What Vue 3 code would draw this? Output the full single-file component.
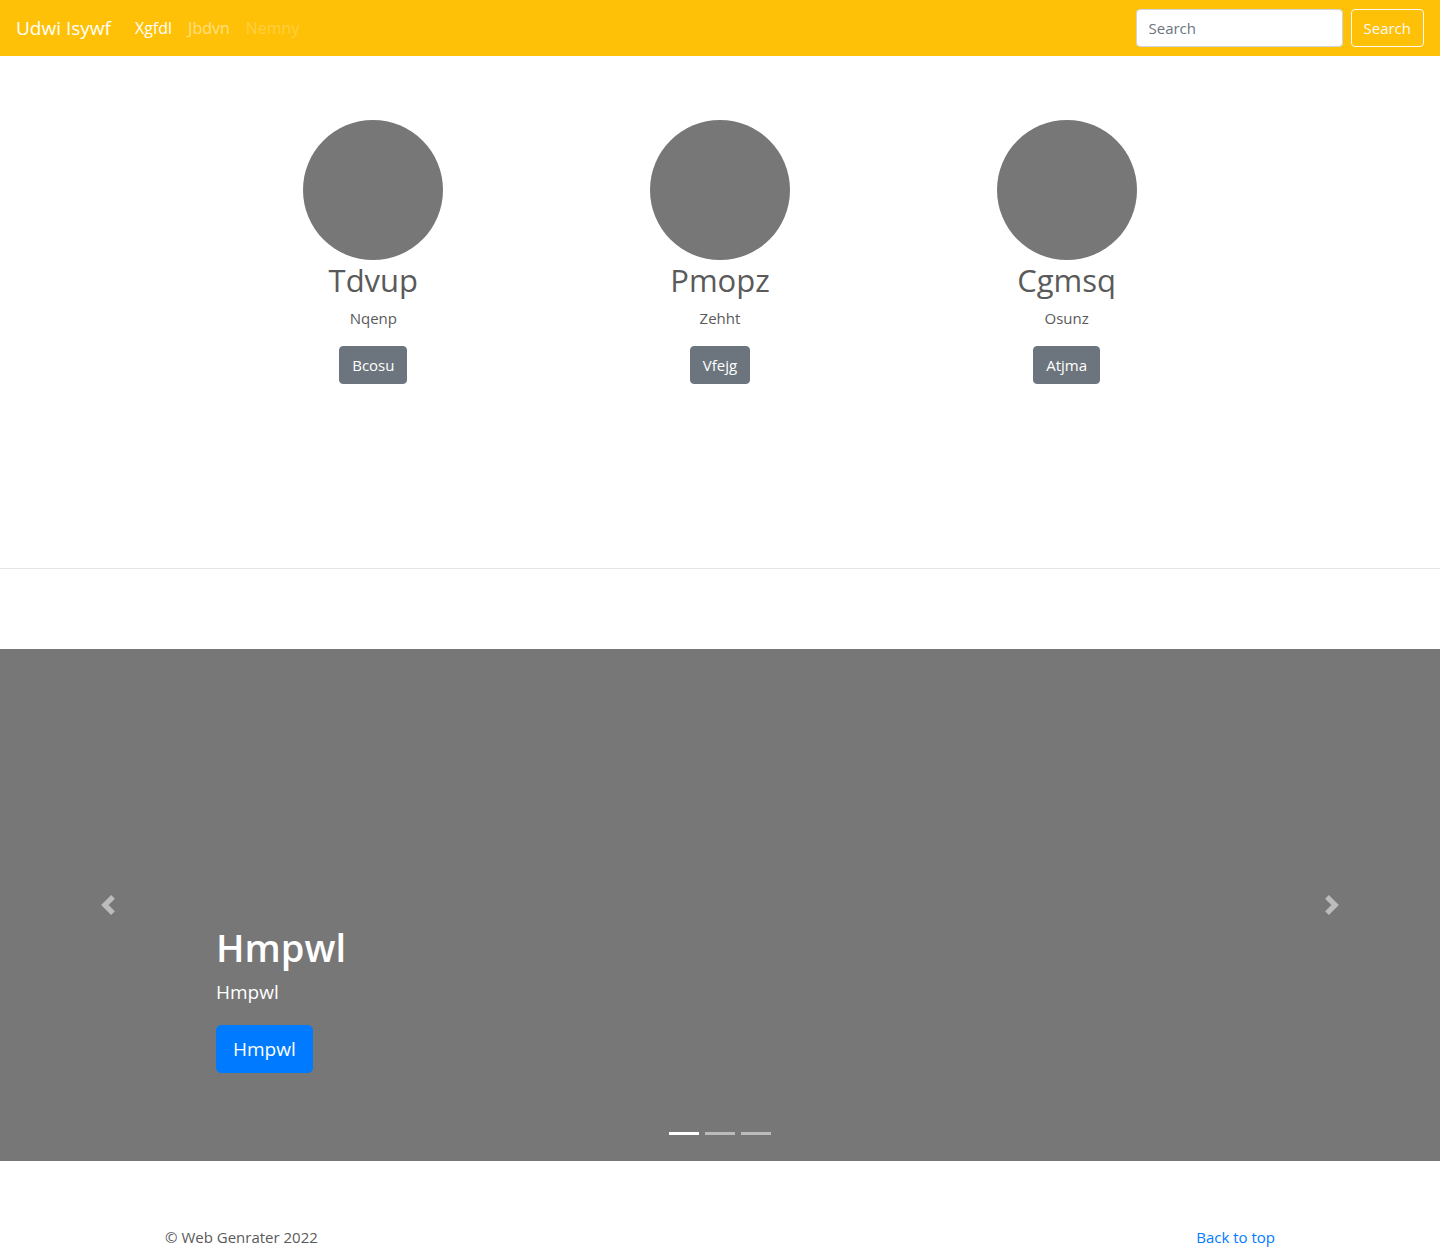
<script setup>
const navLinks = [
  { label: 'Xgfdl', state: 'active' },
  { label: 'Jbdvn', state: '' },
  { label: 'Nemny', state: 'disabled' },
]
const features = [
  { title: 'Tdvup', text: 'Nqenp', action: 'Bcosu' },
  { title: 'Pmopz', text: 'Zehht', action: 'Vfejg' },
  { title: 'Cgmsq', text: 'Osunz', action: 'Atjma' },
]
</script>

<template>
  <div class="page">
    <header class="navbar">
      <a class="brand" href="#">Udwi Isywf</a>
      <nav class="nav">
        <a v-for="link in navLinks" :key="link.label" href="#" class="nav-link" :class="link.state">{{ link.label }}</a>
      </nav>
      <form class="search" @submit.prevent>
        <input class="search-input" type="text" placeholder="Search" aria-label="Search" />
        <button class="btn btn-outline" type="submit">Search</button>
      </form>
    </header>

    <main>
      <section class="features">
        <article v-for="item in features" :key="item.title" class="feature">
          <div class="avatar"></div>
          <h2>{{ item.title }}</h2>
          <p>{{ item.text }}</p>
          <a class="btn btn-secondary" href="#">{{ item.action }}</a>
        </article>
      </section>

      <hr class="divider" />

      <section class="carousel">
        <div class="caption">
          <h1>Hmpwl</h1>
          <p>Hmpwl</p>
          <a class="btn btn-primary" href="#">Hmpwl</a>
        </div>
        <button class="control prev" type="button" aria-label="Previous">
          <svg viewBox="0 0 8 8" width="20" height="20" fill="#fff"><path d="M5.25 0l-4 4 4 4 1.5-1.5L4.25 4l2.5-2.5L5.25 0z" /></svg>
        </button>
        <button class="control next" type="button" aria-label="Next">
          <svg viewBox="0 0 8 8" width="20" height="20" fill="#fff"><path d="M2.75 0l-1.5 1.5L3.75 4l-2.5 2.5L2.75 8l4-4-4-4z" /></svg>
        </button>
        <ol class="indicators">
          <li class="active"></li>
          <li></li>
          <li></li>
        </ol>
      </section>
    </main>

    <footer class="footer">
      <p>© Web Genrater 2022</p>
      <a href="#">Back to top</a>
    </footer>
  </div>
</template>

<style>
body {
  margin: 0;
  background: #fff;
}
</style>

<style scoped>
* {
  box-sizing: border-box;
}
.page {
  font-family: "Segoe UI", "Open Sans", "Noto Sans", sans-serif;
  font-size: 15px;
  line-height: 24px;
  color: #5a5a5a;
}
a {
  text-decoration: none;
}
.navbar {
  display: flex;
  align-items: center;
  height: 56px;
  padding: 0 16px;
  background: #ffc107;
}
.brand {
  margin-right: 16px;
  font-size: 19px;
  line-height: 30px;
  color: #fff;
}
.nav {
  display: flex;
}
.nav-link {
  padding: 8px;
  font-size: 16px;
  color: rgba(255, 255, 255, 0.5);
}
.nav-link.active {
  color: #fff;
}
.nav-link.disabled {
  color: rgba(255, 255, 255, 0.25);
}
.search {
  display: flex;
  gap: 8px;
  margin-left: auto;
}
.search-input {
  width: 207px;
  height: 38px;
  padding: 6px 12px;
  border: 1px solid #ced4da;
  border-radius: 4px;
  background: #fff;
  font: inherit;
  color: #495057;
}
.search-input::placeholder {
  color: #6c757d;
  opacity: 1;
}
.btn {
  display: inline-block;
  padding: 6px 12px;
  border: 1px solid transparent;
  border-radius: 4px;
  font: inherit;
  color: #fff;
  cursor: pointer;
}
.btn-outline {
  border-color: #f8f9fa;
  background: transparent;
  color: #f8f9fa;
}
.btn-secondary {
  border-color: #6c757d;
  background: #6c757d;
}
.btn-primary {
  padding: 8px 16px;
  border-color: #007bff;
  border-radius: 5px;
  background: #007bff;
  font-size: 19px;
  line-height: 30px;
}
.features {
  display: grid;
  grid-template-columns: repeat(3, 1fr);
  max-width: 1140px;
  margin: 64px auto 0;
  padding: 0 50px;
  text-align: center;
}
.avatar {
  width: 140px;
  height: 140px;
  margin: 0 auto;
  border-radius: 50%;
  background: #777;
}
.feature h2 {
  margin: 0 0 6px;
  font-size: 31px;
  font-weight: 400;
  line-height: 40px;
}
.feature p {
  margin: 0 0 16px;
}
.divider {
  height: 1px;
  margin: 184px 0 80px;
  border: 0;
  background: #e5e5e5;
}
.carousel {
  position: relative;
  height: 512px;
  background: #777;
  color: #fff;
}
.caption {
  position: absolute;
  right: 15%;
  bottom: 88px;
  left: 15%;
}
.caption h1 {
  margin: 0 0 6px;
  font-size: 38px;
  font-weight: 600;
  line-height: 48px;
}
.caption p {
  margin: 0 0 18px;
  font-size: 19px;
  line-height: 30px;
}
.control {
  position: absolute;
  top: 0;
  bottom: 0;
  display: flex;
  align-items: center;
  justify-content: center;
  width: 15%;
  padding: 0;
  border: 0;
  background: none;
  opacity: 0.5;
  cursor: pointer;
}
.prev {
  left: 0;
}
.next {
  right: 0;
}
.indicators {
  position: absolute;
  right: 15%;
  bottom: 16px;
  left: 15%;
  display: flex;
  justify-content: center;
  gap: 6px;
  margin: 0;
  padding: 0;
  list-style: none;
}
.indicators li {
  width: 30px;
  height: 23px;
  border-top: 10px solid transparent;
  border-bottom: 10px solid transparent;
  background: #fff;
  background-clip: padding-box;
  opacity: 0.5;
}
.indicators .active {
  opacity: 1;
}
.footer {
  display: flex;
  justify-content: space-between;
  max-width: 1140px;
  margin: 64px auto 0;
  padding: 0 15px;
}
.footer p {
  margin: 0;
}
.footer a {
  color: #007bff;
}
</style>
